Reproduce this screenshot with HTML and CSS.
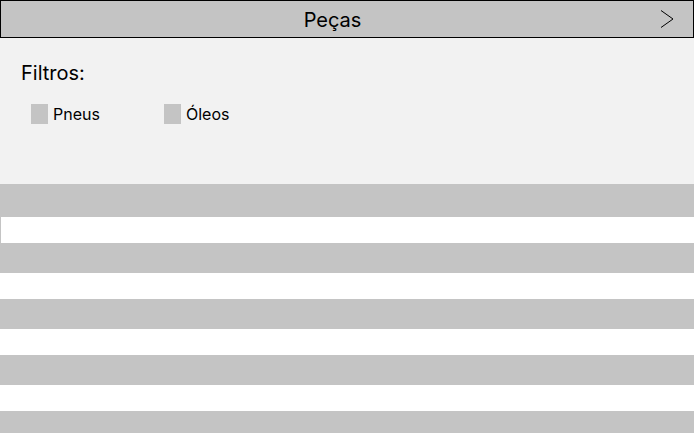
FILE: index.html
```html
<!DOCTYPE html>
<html lang="pt">
<head>
<meta charset="utf-8">
<title>Peças</title>
<link rel="stylesheet" href="styles.css">
</head>
<body>
<div class="page">
  <header class="topbar">
    <h1 class="title">Peças</h1>
    <span class="next">
      <svg width="14" height="18" viewBox="0 0 14 18"><path d="M1 0.5 L13 9 L1 17.5" fill="none" stroke="#000" stroke-width="1"/></svg>
    </span>
  </header>
  <section class="filters">
    <div class="filters-label">Filtros:</div>
    <div class="options">
      <label class="opt"><span class="box"></span><span class="opt-text">Pneus</span></label>
      <label class="opt opt-low"><span class="box"></span><span class="opt-text">Óleos</span></label>
    </div>
  </section>
  <ul class="list">
    <li class="row row-head"></li>
    <li class="row row-light row-first"></li>
    <li class="row row-dark"></li>
    <li class="row row-light"></li>
    <li class="row row-dark"></li>
    <li class="row row-light"></li>
    <li class="row row-dark"></li>
    <li class="row row-light"></li>
    <li class="row row-dark"></li>
  </ul>
</div>
</body>
</html>
```
FILE: styles.css
```css
html, body {
  margin: 0;
  padding: 0;
  background: #fff;
  overflow: hidden;
}
body {
  font-family: Inter, "Noto Sans", sans-serif;
  color: #000;
}
.page {
  width: 694px;
}
.topbar {
  box-sizing: border-box;
  height: 38px;
  border: 1px solid #000;
  background: #c4c4c4;
  display: flex;
  align-items: center;
}
.title {
  flex: 1;
  margin: 0;
  font-size: 20px;
  font-weight: 400;
  text-align: center;
  padding: 2px 0 0 21px;
  line-height: 34px;
}
.next {
  width: 31px;
  padding-right: 19px;
  display: flex;
  justify-content: flex-end;
  margin-bottom: 1px;
}
.next svg { display: block; }
.filters {
  background: #f2f2f2;
  height: 146px;
  box-sizing: border-box;
  padding: 22px 0 0 21px;
}
.filters-label {
  font-size: 20px;
  line-height: 26px;
}
.options {
  display: flex;
  margin-top: 17px;
  padding-left: 10px;
}
.opt {
  display: flex;
  align-items: center;
  width: 133px;
}
.opt-low { margin-top: 1px; }
.box {
  width: 17px;
  height: 20px;
  background: #c4c4c4;
  margin-right: 5px;
}
.opt-text {
  font-size: 16px;
}
.list {
  list-style: none;
  margin: 0;
  padding: 0;
}
.row { height: 30px; }
.row-head { height: 33px; background: #c4c4c4; }
.row-dark { background: #c4c4c4; }
.row-light { height: 26px; background: #fff; }
.row-first { box-sizing: border-box; border-left: 1px solid #c4c4c4; }
```
